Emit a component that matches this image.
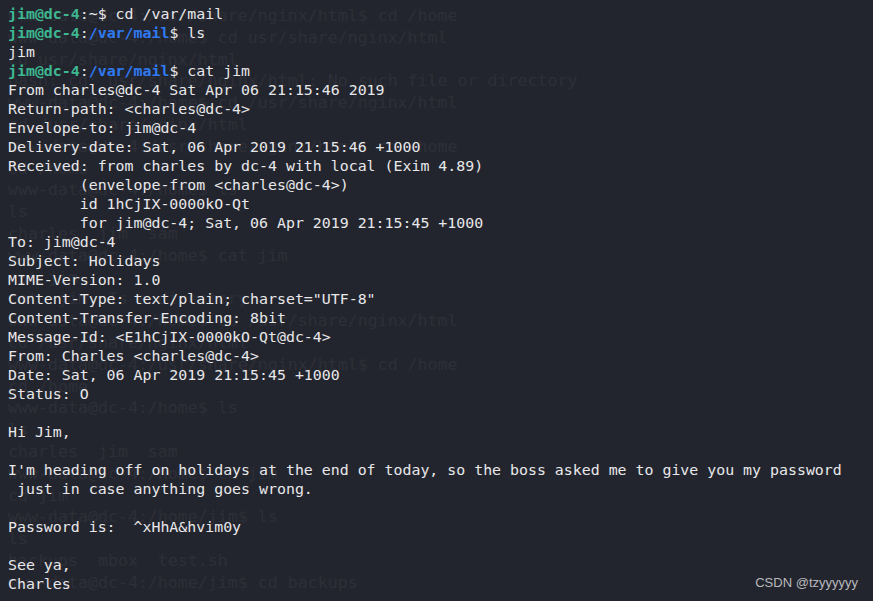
const ghostLines = [
  'www-data@dc-4:/usr/share/nginx/html$ cd /home',
  'www-data@dc-4:/home$ cd usr/share/nginx/html',
  'cd usr/share/nginx/html',
  'bash: cd: usr/share/nginx/html: No such file or directory',
  'www-data@dc-4:/home$ cd /usr/share/nginx/html',
  'cd /usr/share/nginx/html',
  'www-data@dc-4:/usr/share/nginx/html$ cd /home',
  'cd /home',
  'www-data@dc-4:/home$ ls',
  'ls',
  'charles  jim  sam',
  'www-data@dc-4:/home$ cat jim',
  'cat jim',
  'cat: jim: Is a directory',
  'www-data@dc-4:/home$ cd /usr/share/nginx/html',
  'cd /usr/share/nginx/html',
  'www-data@dc-4:/usr/share/nginx/html$ cd /home',
  'cd /home',
  'www-data@dc-4:/home$ ls',
  'ls',
  'charles  jim  sam',
  'www-data@dc-4:/home$ cd jim',
  'cd jim',
  'www-data@dc-4:/home/jim$ ls',
  'ls',
  'backups  mbox  test.sh',
  'www-data@dc-4:/home/jim$ cd backups',
];

const mailLines = [
  'From charles@dc-4 Sat Apr 06 21:15:46 2019',
  'Return-path: <charles@dc-4>',
  'Envelope-to: jim@dc-4',
  'Delivery-date: Sat, 06 Apr 2019 21:15:46 +1000',
  'Received: from charles by dc-4 with local (Exim 4.89)',
  '        (envelope-from <charles@dc-4>)',
  '        id 1hCjIX-0000kO-Qt',
  '        for jim@dc-4; Sat, 06 Apr 2019 21:15:45 +1000',
  'To: jim@dc-4',
  'Subject: Holidays',
  'MIME-Version: 1.0',
  'Content-Type: text/plain; charset="UTF-8"',
  'Content-Transfer-Encoding: 8bit',
  'Message-Id: <E1hCjIX-0000kO-Qt@dc-4>',
  'From: Charles <charles@dc-4>',
  'Date: Sat, 06 Apr 2019 21:15:45 +1000',
  'Status: O',
  '',
  'Hi Jim,',
  '',
  "I'm heading off on holidays at the end of today, so the boss asked me to give you my password",
  ' just in case anything goes wrong.',
  '',
  'Password is:  ^xHhA&hvim0y',
  '',
  'See ya,',
  'Charles',
];

const Prompt = ({ path, cmd }) => (
  <div className="h-[19px]">
    <span className="font-bold text-[#3db891]">jim@dc-4</span>
    <span>:</span>
    <span className={path === '~' ? '' : 'font-bold text-[#2f7af2]'}>{path}</span>
    <span>$ {cmd}</span>
  </div>
);

export default function App() {
  return (
    <div className="relative w-[873px] h-[601px] overflow-hidden bg-[#23252e]">
      {/* faded window behind the terminal */}
      <div className="absolute left-[8px] top-[5px] font-['DejaVu_Sans_Mono',monospace] text-[16.6px] leading-[21.8px] text-[#2d2f38] whitespace-pre">
        {ghostLines.map((l, i) => (
          <div key={i} className="h-[21.8px]">{l}</div>
        ))}
      </div>

      <div className="relative pl-[8px] pt-[5px] font-['DejaVu_Sans_Mono',monospace] text-[14.9px] leading-[19px] text-[#e8e8ea] whitespace-pre">
        <Prompt path="~" cmd="cd /var/mail" />
        <Prompt path="/var/mail" cmd="ls" />
        <div className="h-[19px]">jim</div>
        <Prompt path="/var/mail" cmd="cat jim" />
        {mailLines.map((l, i) => (
          <div key={i} className="h-[19px]">{l}</div>
        ))}
      </div>

      <div className="absolute right-[15px] bottom-[9px] font-['Liberation_Sans',Arial,sans-serif] text-[13px] text-[#b9b9bd]">
        CSDN @tzyyyyyy
      </div>
    </div>
  );
}
